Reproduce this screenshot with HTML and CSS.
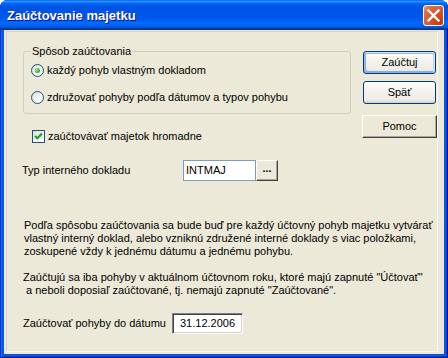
FILE: index.html
```html
<!DOCTYPE html>
<html>
<head>
<meta charset="utf-8">
<link rel="stylesheet" href="styles.css">
</head>
<body>
<div class="window">
  <div class="titlebar">
    <span class="title">Zaúčtovanie majetku</span>
    <span class="close">
      <svg width="19" height="19" viewBox="0 0 19 19"><path d="M4.5 4.5 L14.5 14.5 M14.5 4.5 L4.5 14.5" stroke="#fff" stroke-width="2.4" stroke-linecap="square" fill="none"/></svg>
    </span>
  </div>
  <div class="client">
    <div class="panel">
      <div class="top">
        <div class="left">
          <fieldset class="group">
            <legend>Spôsob zaúčtovania</legend>
            <div class="opt"><span class="radio checked"></span><span>každý pohyb vlastným dokladom</span></div>
            <div class="opt opt2"><span class="radio"></span><span>združovať pohyby podľa dátumov a typov pohybu</span></div>
          </fieldset>
          <div class="check-row"><span class="checkbox"><svg width="11" height="11" viewBox="0 0 11 11"><path d="M2 5 L4.3 7.3 L9 2.6" stroke="#21A121" stroke-width="2.2" fill="none"/></svg></span><span>zaúčtovávať majetok hromadne</span></div>
          <div class="field-row">
            <span class="lbl">Typ interného dokladu</span>
            <span class="edit">INTMAJ</span><span class="ellipsis">...</span>
          </div>
        </div>
        <div class="buttons">
          <div class="btn default">Zaúčtuj</div>
          <div class="btn">Späť</div>
          <div class="btn classic">Pomoc</div>
        </div>
      </div>
      <p class="note">Podľa spôsobu zaúčtovania sa bude buď pre každý účtovný pohyb majetku vytvárať<br>vlastný interný doklad, alebo vzniknú združené interné doklady s viac položkami,<br>zoskupené vždy k jednému dátumu a jednému pohybu.</p>
      <p class="note note2">Zaúčtujú sa iba pohyby v aktuálnom účtovnom roku, ktoré majú zapnuté "Účtovať"<br>&nbsp;a neboli doposiaľ zaúčtované, tj. nemajú zapnuté "Zaúčtované".</p>
      <div class="date-row">
        <span class="dlbl">Zaúčtovať pohyby do dátumu</span>
        <span class="datebox">31.12.2006</span>
      </div>
    </div>
  </div>
</div>
</body>
</html>
```
FILE: styles.css
```css
* { box-sizing: border-box; }
html, body { margin: 0; padding: 0; background: #fff; }
body {
  font-family: "Liberation Sans", Arial, sans-serif;
  font-size: 11px;
  line-height: 13px;
  color: #000;
}
.window {
  width: 448px;
  height: 358px;
  display: flex;
  flex-direction: column;
  border-radius: 8px 8px 0 0;
  overflow: hidden;
  background: #0A55E6;
  box-shadow: inset 1px 0 #0831D9, inset -1px -1px #00138C, inset 2px 0 #166AEE, inset -2px -2px #0046D0;
}
.titlebar {
  height: 30px;
  flex: none;
  display: flex;
  align-items: center;
  justify-content: space-between;
  padding: 1px 4px 0 7px;
  background: linear-gradient(to bottom, #0058ee 0%, #3593ff 4%, #288eff 6%, #127dff 8%, #036ffc 10%, #0262ee 14%, #0057e5 20%, #0054e3 24%, #0055eb 56%, #005bf5 66%, #026afe 76%, #0062ef 86%, #0052d6 92%, #0040ab 94%, #003092 100%);
}
.title {
  color: #fff;
  font-weight: bold;
  font-size: 13px;
  text-shadow: 1px 1px #0F1089;
}
.close {
  width: 21px;
  height: 21px;
  border: 1px solid #fff;
  border-radius: 3px;
  background: radial-gradient(circle at 85% 85%, #C23C00 0%, #D8522A 45%, #E06A42 75%, #EE9C7C 100%);
  display: flex;
  align-items: center;
  justify-content: center;
  margin-top: -1px;
}
.close svg { display: block; }
.client {
  flex: 1;
  margin: 0 4px 4px;
  background: #ECE9D8;
  padding: 1px 6px 2px 2px;
}
.panel {
  height: 100%;
  border: 1px solid;
  border-color: #D8D4C6 #F8F7F2 #F8F7F2 #D8D4C6;
  padding: 13px 0 0 15px;
}
.top {
  display: flex;
  align-items: flex-start;
}
.left { width: 329px; }
.group {
  margin: 0 0 0 1px;
  border: 1px solid #D0D0BF;
  border-radius: 3px;
  padding: 6px 8px 9px 7px;
  min-width: 0;
}
.group legend {
  padding: 0 1px;
  margin-left: 0;
}
.opt {
  display: flex;
  align-items: center;
  gap: 3px;
  height: 13px;
}
.opt2 { margin-top: 14px; }
.radio {
  width: 13px;
  height: 13px;
  flex: none;
  border-radius: 50%;
  border: 1px solid #1C5180;
  background: linear-gradient(135deg, #DCDCD7 0%, #F4F4F0 60%, #fff 100%);
  display: flex;
  align-items: center;
  justify-content: center;
}
.radio.checked::after {
  content: "";
  width: 5px;
  height: 5px;
  border-radius: 50%;
  background: radial-gradient(circle at 35% 35%, #9BEE9B 0%, #3FBF3F 50%, #21A121 100%);
}
.check-row {
  display: flex;
  align-items: center;
  gap: 3px;
  height: 13px;
  margin: 16px 0 0 10px;
}
.checkbox {
  width: 13px;
  height: 13px;
  flex: none;
  border: 1px solid #1C5180;
  background: linear-gradient(135deg, #DCDCD7 0%, #F4F4F0 60%, #fff 100%);
  display: flex;
  align-items: center;
  justify-content: center;
}
.checkbox svg { display: block; }
.field-row {
  display: flex;
  align-items: center;
  height: 21px;
  margin-top: 17px;
}
.lbl { width: 161px; }
.edit {
  width: 73px;
  height: 21px;
  background: #fff;
  border: 1px solid #7F9DB9;
  padding-left: 2px;
  line-height: 19px;
}
.ellipsis {
  width: 22px;
  height: 21px;
  background: #ECE9D8;
  border: 1px solid;
  border-color: #fff #404040 #404040 #fff;
  box-shadow: inset -1px -1px #ACA899;
  font-weight: bold;
  text-align: center;
  line-height: 15px;
}
.buttons {
  margin: 6px 0 0 12px;
  display: flex;
  flex-direction: column;
}
.btn {
  width: 73px;
  height: 23px;
  border: 1px solid #003C74;
  border-radius: 3px;
  background: linear-gradient(to bottom, #fff 0%, #F4F3EE 40%, #ECEBE6 86%, #D6D0C5 100%);
  display: flex;
  align-items: center;
  justify-content: center;
}
.btn + .btn { margin-top: 7px; }
.btn.default {
  box-shadow: inset -1px 1px #CEE7FF, inset 1px 2px #98B8EA, inset -2px 2px #BCD4F6, inset 1px -1px #89ADE4, inset 2px -2px #89ADE4;
}
.btn.classic {
  width: 75px;
  margin: 11px 0 0 -1px;
  border-radius: 0;
  background: #ECE9D8;
  border-color: #fff #404040 #404040 #fff;
  box-shadow: inset -1px -1px #ACA899;
}
.note {
  margin: 38px 0 0 2px;
  white-space: nowrap;
}
.note2 { margin-top: 13px; margin-left: 1px; }
.date-row {
  display: flex;
  align-items: center;
  height: 21px;
  margin: 16px 0 0 1px;
}
.dlbl { width: 149px; }
.datebox {
  width: 71px;
  height: 21px;
  background: #fff;
  border: 1px solid;
  border-color: #808080 #fff #fff #808080;
  box-shadow: inset 1px 1px #404040, inset -1px -1px #D4D0C8;
  text-align: center;
  line-height: 19px;
}
```
